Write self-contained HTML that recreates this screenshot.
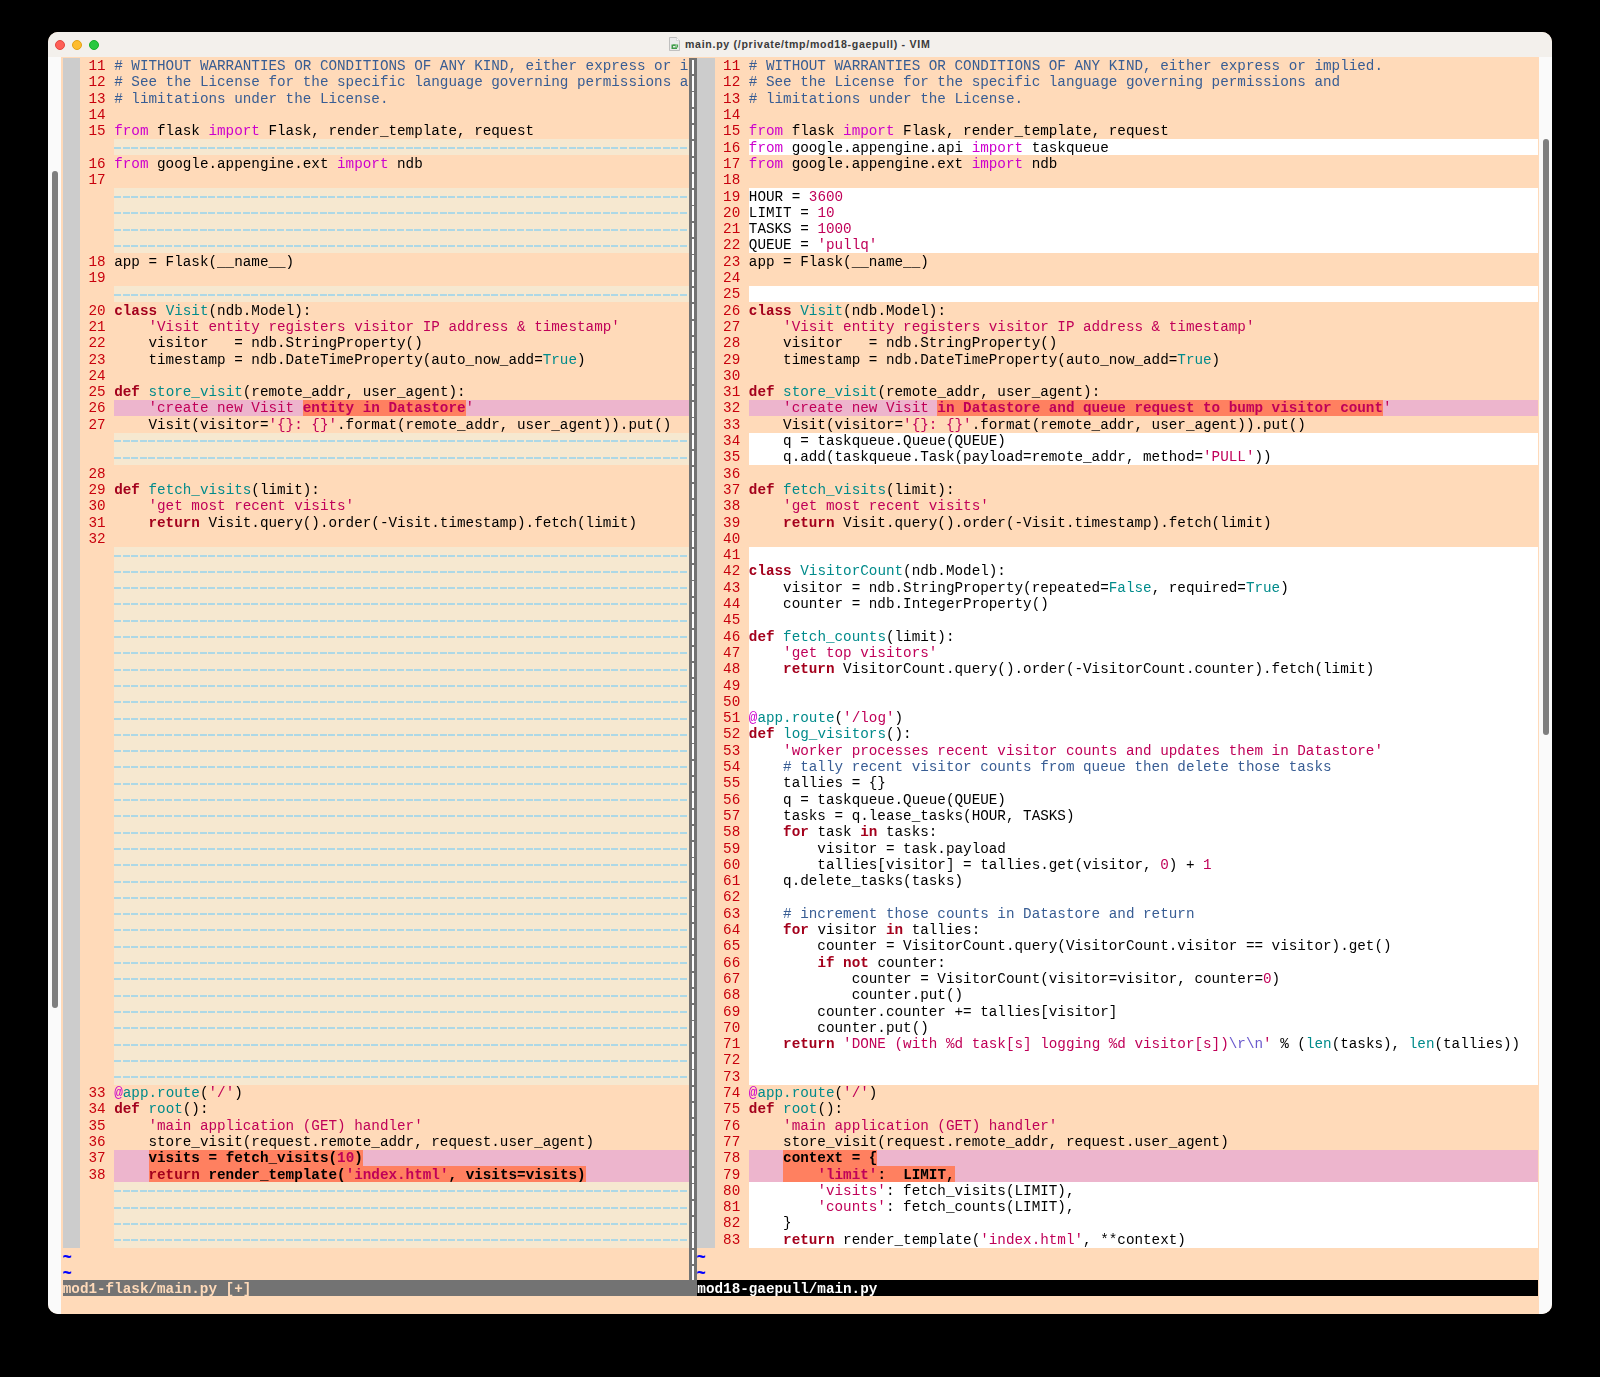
<!DOCTYPE html>
<html><head><meta charset="utf-8"><style>
html,body{margin:0;padding:0;background:#000;}
body{width:1600px;height:1377px;position:relative;overflow:hidden;}
#win{position:absolute;left:48px;top:32px;width:1504px;height:1282px;border-radius:10px;overflow:hidden;background:#ffdab9;}
#title{position:absolute;left:0;top:0;width:1504px;height:24.5px;background:#f3f0ec;}
.abs div{position:absolute;}
#text{position:absolute;left:0;top:0;width:1600px;height:1377px;will-change:transform;}
.t{position:absolute;margin-top:0.5px;white-space:pre;font-family:"Liberation Mono",monospace;font-size:14.296px;line-height:16.3px;height:16.3px;color:#000;}
.ln{color:#c8000c;}
.nt{color:#0000ff;font-weight:bold;}
.cm{color:#385d94;}
.st{color:#c00058;}
.sp{color:#6a5acd;}
.id{color:#008b8b;}
.kw{color:#a3001c;font-weight:bold;}
.pp{color:#cd00cd;}
.b{font-weight:bold;}
.dash{position:absolute;height:2px;background:repeating-linear-gradient(90deg,#add8e6 0,#add8e6 7px,transparent 7px,transparent 8.5757px);}
.vs{position:absolute;width:2.4px;background:repeating-linear-gradient(180deg,transparent 0,transparent 1.8px,#fff 1.8px,#fff 16.3px);}
.sbtrack{position:absolute;bottom:0;background:#fafafa;}
.sbthumb{position:absolute;width:6.4px;border-radius:3.2px;background:#7f7f7f;}
#ttext{position:absolute;left:637px;top:6px;font-family:"Liberation Sans",sans-serif;font-weight:bold;font-size:10.6px;letter-spacing:0.7px;color:#3a3a3a;white-space:pre;}
.ficon{display:inline-block;width:10px;height:13px;background:#eee;border:1px solid #bbb;box-sizing:border-box;vertical-align:-2px;margin-right:6px;}
.tl{position:absolute;top:7.5px;width:10px;height:10px;border-radius:50%;box-sizing:border-box;border:0.6px solid;}
</style></head>
<body>
<div id="win">
 <div id="title">
  <div class="tl" style="left:7px;background:#fe5f57;border-color:#e2463f;"></div>
  <div class="tl" style="left:24.1px;background:#febc2e;border-color:#e1a116;"></div>
  <div class="tl" style="left:41.2px;background:#28c840;border-color:#14ae28;"></div>
  <svg style="position:absolute;left:621px;top:5px" width="11" height="14" viewBox="0 0 11 14"><path d="M0.5 0.5 H7.5 L10.5 3.5 V13.5 H0.5 Z" fill="#ececec" stroke="#b4b4b4" stroke-width="0.8"/><path d="M7.5 0.5 V3.5 H10.5" fill="#fff" stroke="#c8c8c8" stroke-width="0.6"/><path d="M2.5 7.5 H6.5 V9 H4 V10.5 H8 V12 H2.5 Z" fill="#3f9a4a"/><path d="M4 8 H8.5 V10 H6" fill="none" stroke="#4aa553" stroke-width="1.2"/></svg>
  <div id="ttext">main.py (/private/tmp/mod18-gaepull) - VIM</div>
 </div>
 <div class="sbtrack" style="left:0;top:24.5px;width:12.7px;"></div>
 <div class="sbthumb" style="left:3.6px;top:138.9px;height:836.9px;"></div>
 <div class="sbtrack" style="left:1491.2px;top:24.5px;width:12.8px;"></div>
 <div class="sbthumb" style="left:1494.8px;top:107.2px;height:595.5px;"></div>
</div>
<div id="content" class="abs">
<div style="left:62.76px;top:57.65px;width:17.15px;height:1189.90px;background:#cccccc;"></div>
<div style="left:114.21px;top:139.15px;width:574.57px;height:16.30px;background:#f6e8d0;"></div>
<div class="dash" style="left:114.21px;top:147.05px;width:574.57px"></div>
<div style="left:114.21px;top:188.05px;width:574.57px;height:16.30px;background:#f6e8d0;"></div>
<div class="dash" style="left:114.21px;top:195.95px;width:574.57px"></div>
<div style="left:114.21px;top:204.35px;width:574.57px;height:16.30px;background:#f6e8d0;"></div>
<div class="dash" style="left:114.21px;top:212.25px;width:574.57px"></div>
<div style="left:114.21px;top:220.65px;width:574.57px;height:16.30px;background:#f6e8d0;"></div>
<div class="dash" style="left:114.21px;top:228.55px;width:574.57px"></div>
<div style="left:114.21px;top:236.95px;width:574.57px;height:16.30px;background:#f6e8d0;"></div>
<div class="dash" style="left:114.21px;top:244.85px;width:574.57px"></div>
<div style="left:114.21px;top:285.85px;width:574.57px;height:16.30px;background:#f6e8d0;"></div>
<div class="dash" style="left:114.21px;top:293.75px;width:574.57px"></div>
<div style="left:114.21px;top:399.95px;width:574.57px;height:16.30px;background:#edb5cd;"></div>
<div style="left:302.88px;top:399.95px;width:162.94px;height:16.30px;background:#ff8060;"></div>
<div style="left:114.21px;top:432.55px;width:574.57px;height:16.30px;background:#f6e8d0;"></div>
<div class="dash" style="left:114.21px;top:440.45px;width:574.57px"></div>
<div style="left:114.21px;top:448.85px;width:574.57px;height:16.30px;background:#f6e8d0;"></div>
<div class="dash" style="left:114.21px;top:456.75px;width:574.57px"></div>
<div style="left:114.21px;top:546.65px;width:574.57px;height:16.30px;background:#f6e8d0;"></div>
<div class="dash" style="left:114.21px;top:554.55px;width:574.57px"></div>
<div style="left:114.21px;top:562.95px;width:574.57px;height:16.30px;background:#f6e8d0;"></div>
<div class="dash" style="left:114.21px;top:570.85px;width:574.57px"></div>
<div style="left:114.21px;top:579.25px;width:574.57px;height:16.30px;background:#f6e8d0;"></div>
<div class="dash" style="left:114.21px;top:587.15px;width:574.57px"></div>
<div style="left:114.21px;top:595.55px;width:574.57px;height:16.30px;background:#f6e8d0;"></div>
<div class="dash" style="left:114.21px;top:603.45px;width:574.57px"></div>
<div style="left:114.21px;top:611.85px;width:574.57px;height:16.30px;background:#f6e8d0;"></div>
<div class="dash" style="left:114.21px;top:619.75px;width:574.57px"></div>
<div style="left:114.21px;top:628.15px;width:574.57px;height:16.30px;background:#f6e8d0;"></div>
<div class="dash" style="left:114.21px;top:636.05px;width:574.57px"></div>
<div style="left:114.21px;top:644.45px;width:574.57px;height:16.30px;background:#f6e8d0;"></div>
<div class="dash" style="left:114.21px;top:652.35px;width:574.57px"></div>
<div style="left:114.21px;top:660.75px;width:574.57px;height:16.30px;background:#f6e8d0;"></div>
<div class="dash" style="left:114.21px;top:668.65px;width:574.57px"></div>
<div style="left:114.21px;top:677.05px;width:574.57px;height:16.30px;background:#f6e8d0;"></div>
<div class="dash" style="left:114.21px;top:684.95px;width:574.57px"></div>
<div style="left:114.21px;top:693.35px;width:574.57px;height:16.30px;background:#f6e8d0;"></div>
<div class="dash" style="left:114.21px;top:701.25px;width:574.57px"></div>
<div style="left:114.21px;top:709.65px;width:574.57px;height:16.30px;background:#f6e8d0;"></div>
<div class="dash" style="left:114.21px;top:717.55px;width:574.57px"></div>
<div style="left:114.21px;top:725.95px;width:574.57px;height:16.30px;background:#f6e8d0;"></div>
<div class="dash" style="left:114.21px;top:733.85px;width:574.57px"></div>
<div style="left:114.21px;top:742.25px;width:574.57px;height:16.30px;background:#f6e8d0;"></div>
<div class="dash" style="left:114.21px;top:750.15px;width:574.57px"></div>
<div style="left:114.21px;top:758.55px;width:574.57px;height:16.30px;background:#f6e8d0;"></div>
<div class="dash" style="left:114.21px;top:766.45px;width:574.57px"></div>
<div style="left:114.21px;top:774.85px;width:574.57px;height:16.30px;background:#f6e8d0;"></div>
<div class="dash" style="left:114.21px;top:782.75px;width:574.57px"></div>
<div style="left:114.21px;top:791.15px;width:574.57px;height:16.30px;background:#f6e8d0;"></div>
<div class="dash" style="left:114.21px;top:799.05px;width:574.57px"></div>
<div style="left:114.21px;top:807.45px;width:574.57px;height:16.30px;background:#f6e8d0;"></div>
<div class="dash" style="left:114.21px;top:815.35px;width:574.57px"></div>
<div style="left:114.21px;top:823.75px;width:574.57px;height:16.30px;background:#f6e8d0;"></div>
<div class="dash" style="left:114.21px;top:831.65px;width:574.57px"></div>
<div style="left:114.21px;top:840.05px;width:574.57px;height:16.30px;background:#f6e8d0;"></div>
<div class="dash" style="left:114.21px;top:847.95px;width:574.57px"></div>
<div style="left:114.21px;top:856.35px;width:574.57px;height:16.30px;background:#f6e8d0;"></div>
<div class="dash" style="left:114.21px;top:864.25px;width:574.57px"></div>
<div style="left:114.21px;top:872.65px;width:574.57px;height:16.30px;background:#f6e8d0;"></div>
<div class="dash" style="left:114.21px;top:880.55px;width:574.57px"></div>
<div style="left:114.21px;top:888.95px;width:574.57px;height:16.30px;background:#f6e8d0;"></div>
<div class="dash" style="left:114.21px;top:896.85px;width:574.57px"></div>
<div style="left:114.21px;top:905.25px;width:574.57px;height:16.30px;background:#f6e8d0;"></div>
<div class="dash" style="left:114.21px;top:913.15px;width:574.57px"></div>
<div style="left:114.21px;top:921.55px;width:574.57px;height:16.30px;background:#f6e8d0;"></div>
<div class="dash" style="left:114.21px;top:929.45px;width:574.57px"></div>
<div style="left:114.21px;top:937.85px;width:574.57px;height:16.30px;background:#f6e8d0;"></div>
<div class="dash" style="left:114.21px;top:945.75px;width:574.57px"></div>
<div style="left:114.21px;top:954.15px;width:574.57px;height:16.30px;background:#f6e8d0;"></div>
<div class="dash" style="left:114.21px;top:962.05px;width:574.57px"></div>
<div style="left:114.21px;top:970.45px;width:574.57px;height:16.30px;background:#f6e8d0;"></div>
<div class="dash" style="left:114.21px;top:978.35px;width:574.57px"></div>
<div style="left:114.21px;top:986.75px;width:574.57px;height:16.30px;background:#f6e8d0;"></div>
<div class="dash" style="left:114.21px;top:994.65px;width:574.57px"></div>
<div style="left:114.21px;top:1003.05px;width:574.57px;height:16.30px;background:#f6e8d0;"></div>
<div class="dash" style="left:114.21px;top:1010.95px;width:574.57px"></div>
<div style="left:114.21px;top:1019.35px;width:574.57px;height:16.30px;background:#f6e8d0;"></div>
<div class="dash" style="left:114.21px;top:1027.25px;width:574.57px"></div>
<div style="left:114.21px;top:1035.65px;width:574.57px;height:16.30px;background:#f6e8d0;"></div>
<div class="dash" style="left:114.21px;top:1043.55px;width:574.57px"></div>
<div style="left:114.21px;top:1051.95px;width:574.57px;height:16.30px;background:#f6e8d0;"></div>
<div class="dash" style="left:114.21px;top:1059.85px;width:574.57px"></div>
<div style="left:114.21px;top:1068.25px;width:574.57px;height:16.30px;background:#f6e8d0;"></div>
<div class="dash" style="left:114.21px;top:1076.15px;width:574.57px"></div>
<div style="left:114.21px;top:1149.75px;width:574.57px;height:16.30px;background:#edb5cd;"></div>
<div style="left:148.52px;top:1149.75px;width:214.39px;height:16.30px;background:#ff8060;"></div>
<div style="left:114.21px;top:1166.05px;width:574.57px;height:16.30px;background:#edb5cd;"></div>
<div style="left:148.52px;top:1166.05px;width:437.36px;height:16.30px;background:#ff8060;"></div>
<div style="left:114.21px;top:1182.35px;width:574.57px;height:16.30px;background:#f6e8d0;"></div>
<div class="dash" style="left:114.21px;top:1190.25px;width:574.57px"></div>
<div style="left:114.21px;top:1198.65px;width:574.57px;height:16.30px;background:#f6e8d0;"></div>
<div class="dash" style="left:114.21px;top:1206.55px;width:574.57px"></div>
<div style="left:114.21px;top:1214.95px;width:574.57px;height:16.30px;background:#f6e8d0;"></div>
<div class="dash" style="left:114.21px;top:1222.85px;width:574.57px"></div>
<div style="left:114.21px;top:1231.25px;width:574.57px;height:16.30px;background:#f6e8d0;"></div>
<div class="dash" style="left:114.21px;top:1239.15px;width:574.57px"></div>
<div style="left:697.36px;top:57.65px;width:17.15px;height:1189.90px;background:#cccccc;"></div>
<div style="left:748.82px;top:139.15px;width:788.96px;height:16.30px;background:#ffffff;"></div>
<div style="left:748.82px;top:188.05px;width:788.96px;height:16.30px;background:#ffffff;"></div>
<div style="left:748.82px;top:204.35px;width:788.96px;height:16.30px;background:#ffffff;"></div>
<div style="left:748.82px;top:220.65px;width:788.96px;height:16.30px;background:#ffffff;"></div>
<div style="left:748.82px;top:236.95px;width:788.96px;height:16.30px;background:#ffffff;"></div>
<div style="left:748.82px;top:285.85px;width:788.96px;height:16.30px;background:#ffffff;"></div>
<div style="left:748.82px;top:399.95px;width:788.96px;height:16.30px;background:#edb5cd;"></div>
<div style="left:937.48px;top:399.95px;width:445.94px;height:16.30px;background:#ff8060;"></div>
<div style="left:748.82px;top:432.55px;width:788.96px;height:16.30px;background:#ffffff;"></div>
<div style="left:748.82px;top:448.85px;width:788.96px;height:16.30px;background:#ffffff;"></div>
<div style="left:748.82px;top:546.65px;width:788.96px;height:16.30px;background:#ffffff;"></div>
<div style="left:748.82px;top:562.95px;width:788.96px;height:16.30px;background:#ffffff;"></div>
<div style="left:748.82px;top:579.25px;width:788.96px;height:16.30px;background:#ffffff;"></div>
<div style="left:748.82px;top:595.55px;width:788.96px;height:16.30px;background:#ffffff;"></div>
<div style="left:748.82px;top:611.85px;width:788.96px;height:16.30px;background:#ffffff;"></div>
<div style="left:748.82px;top:628.15px;width:788.96px;height:16.30px;background:#ffffff;"></div>
<div style="left:748.82px;top:644.45px;width:788.96px;height:16.30px;background:#ffffff;"></div>
<div style="left:748.82px;top:660.75px;width:788.96px;height:16.30px;background:#ffffff;"></div>
<div style="left:748.82px;top:677.05px;width:788.96px;height:16.30px;background:#ffffff;"></div>
<div style="left:748.82px;top:693.35px;width:788.96px;height:16.30px;background:#ffffff;"></div>
<div style="left:748.82px;top:709.65px;width:788.96px;height:16.30px;background:#ffffff;"></div>
<div style="left:748.82px;top:725.95px;width:788.96px;height:16.30px;background:#ffffff;"></div>
<div style="left:748.82px;top:742.25px;width:788.96px;height:16.30px;background:#ffffff;"></div>
<div style="left:748.82px;top:758.55px;width:788.96px;height:16.30px;background:#ffffff;"></div>
<div style="left:748.82px;top:774.85px;width:788.96px;height:16.30px;background:#ffffff;"></div>
<div style="left:748.82px;top:791.15px;width:788.96px;height:16.30px;background:#ffffff;"></div>
<div style="left:748.82px;top:807.45px;width:788.96px;height:16.30px;background:#ffffff;"></div>
<div style="left:748.82px;top:823.75px;width:788.96px;height:16.30px;background:#ffffff;"></div>
<div style="left:748.82px;top:840.05px;width:788.96px;height:16.30px;background:#ffffff;"></div>
<div style="left:748.82px;top:856.35px;width:788.96px;height:16.30px;background:#ffffff;"></div>
<div style="left:748.82px;top:872.65px;width:788.96px;height:16.30px;background:#ffffff;"></div>
<div style="left:748.82px;top:888.95px;width:788.96px;height:16.30px;background:#ffffff;"></div>
<div style="left:748.82px;top:905.25px;width:788.96px;height:16.30px;background:#ffffff;"></div>
<div style="left:748.82px;top:921.55px;width:788.96px;height:16.30px;background:#ffffff;"></div>
<div style="left:748.82px;top:937.85px;width:788.96px;height:16.30px;background:#ffffff;"></div>
<div style="left:748.82px;top:954.15px;width:788.96px;height:16.30px;background:#ffffff;"></div>
<div style="left:748.82px;top:970.45px;width:788.96px;height:16.30px;background:#ffffff;"></div>
<div style="left:748.82px;top:986.75px;width:788.96px;height:16.30px;background:#ffffff;"></div>
<div style="left:748.82px;top:1003.05px;width:788.96px;height:16.30px;background:#ffffff;"></div>
<div style="left:748.82px;top:1019.35px;width:788.96px;height:16.30px;background:#ffffff;"></div>
<div style="left:748.82px;top:1035.65px;width:788.96px;height:16.30px;background:#ffffff;"></div>
<div style="left:748.82px;top:1051.95px;width:788.96px;height:16.30px;background:#ffffff;"></div>
<div style="left:748.82px;top:1068.25px;width:788.96px;height:16.30px;background:#ffffff;"></div>
<div style="left:748.82px;top:1149.75px;width:788.96px;height:16.30px;background:#edb5cd;"></div>
<div style="left:783.12px;top:1149.75px;width:94.33px;height:16.30px;background:#ff8060;"></div>
<div style="left:748.82px;top:1166.05px;width:788.96px;height:16.30px;background:#edb5cd;"></div>
<div style="left:783.12px;top:1166.05px;width:171.51px;height:16.30px;background:#ff8060;"></div>
<div style="left:748.82px;top:1182.35px;width:788.96px;height:16.30px;background:#ffffff;"></div>
<div style="left:748.82px;top:1198.65px;width:788.96px;height:16.30px;background:#ffffff;"></div>
<div style="left:748.82px;top:1214.95px;width:788.96px;height:16.30px;background:#ffffff;"></div>
<div style="left:748.82px;top:1231.25px;width:788.96px;height:16.30px;background:#ffffff;"></div>
<div style="left:688.79px;top:57.65px;width:8.58px;height:1222.50px;background:#737373;"></div>
<div class="vs" style="left:691.87px;top:57.65px;height:1222.50px"></div>
<div style="left:62.76px;top:1280.15px;width:634.60px;height:16.30px;background:#737373;"></div>
<div style="left:697.36px;top:1280.15px;width:840.42px;height:16.30px;background:#000000;"></div>
</div>
<div id="text">
<div class="t ln" style="left:79.91px;top:57.65px"> 11 </div>
<div class="t" style="left:114.21px;top:57.65px"><span class="cm"># WITHOUT WARRANTIES OR CONDITIONS OF ANY KIND, either express or i</span></div>
<div class="t ln" style="left:79.91px;top:73.95px"> 12 </div>
<div class="t" style="left:114.21px;top:73.95px"><span class="cm"># See the License for the specific language governing permissions a</span></div>
<div class="t ln" style="left:79.91px;top:90.25px"> 13 </div>
<div class="t" style="left:114.21px;top:90.25px"><span class="cm"># limitations under the License.</span></div>
<div class="t ln" style="left:79.91px;top:106.55px"> 14 </div>
<div class="t ln" style="left:79.91px;top:122.85px"> 15 </div>
<div class="t" style="left:114.21px;top:122.85px"><span class="pp">from</span> flask <span class="pp">import</span> Flask, render_template, request</div>
<div class="t ln" style="left:79.91px;top:155.45px"> 16 </div>
<div class="t" style="left:114.21px;top:155.45px"><span class="pp">from</span> google.appengine.ext <span class="pp">import</span> ndb</div>
<div class="t ln" style="left:79.91px;top:171.75px"> 17 </div>
<div class="t ln" style="left:79.91px;top:253.25px"> 18 </div>
<div class="t" style="left:114.21px;top:253.25px">app = Flask(__name__)</div>
<div class="t ln" style="left:79.91px;top:269.55px"> 19 </div>
<div class="t ln" style="left:79.91px;top:302.15px"> 20 </div>
<div class="t" style="left:114.21px;top:302.15px"><span class="kw">class</span> <span class="id">Visit</span>(ndb.Model):</div>
<div class="t ln" style="left:79.91px;top:318.45px"> 21 </div>
<div class="t" style="left:114.21px;top:318.45px">    <span class="st">&#x27;Visit entity registers visitor IP address &amp; timestamp&#x27;</span></div>
<div class="t ln" style="left:79.91px;top:334.75px"> 22 </div>
<div class="t" style="left:114.21px;top:334.75px">    visitor   = ndb.StringProperty()</div>
<div class="t ln" style="left:79.91px;top:351.05px"> 23 </div>
<div class="t" style="left:114.21px;top:351.05px">    timestamp = ndb.DateTimeProperty(auto_now_add=<span class="id">True</span>)</div>
<div class="t ln" style="left:79.91px;top:367.35px"> 24 </div>
<div class="t ln" style="left:79.91px;top:383.65px"> 25 </div>
<div class="t" style="left:114.21px;top:383.65px"><span class="kw">def</span> <span class="id">store_visit</span>(remote_addr, user_agent):</div>
<div class="t ln" style="left:79.91px;top:399.95px"> 26 </div>
<div class="t" style="left:114.21px;top:399.95px">    <span class="st">&#x27;create new Visit </span><span class="st b">entity in Datastore</span><span class="st">&#x27;</span></div>
<div class="t ln" style="left:79.91px;top:416.25px"> 27 </div>
<div class="t" style="left:114.21px;top:416.25px">    Visit(visitor=<span class="st">&#x27;{}: {}&#x27;</span>.format(remote_addr, user_agent)).put()</div>
<div class="t ln" style="left:79.91px;top:465.15px"> 28 </div>
<div class="t ln" style="left:79.91px;top:481.45px"> 29 </div>
<div class="t" style="left:114.21px;top:481.45px"><span class="kw">def</span> <span class="id">fetch_visits</span>(limit):</div>
<div class="t ln" style="left:79.91px;top:497.75px"> 30 </div>
<div class="t" style="left:114.21px;top:497.75px">    <span class="st">&#x27;get most recent visits&#x27;</span></div>
<div class="t ln" style="left:79.91px;top:514.05px"> 31 </div>
<div class="t" style="left:114.21px;top:514.05px">    <span class="kw">return</span> Visit.query().order(-Visit.timestamp).fetch(limit)</div>
<div class="t ln" style="left:79.91px;top:530.35px"> 32 </div>
<div class="t ln" style="left:79.91px;top:1084.55px"> 33 </div>
<div class="t" style="left:114.21px;top:1084.55px"><span class="pp">@</span><span class="id">app.route</span>(<span class="st">&#x27;/&#x27;</span>)</div>
<div class="t ln" style="left:79.91px;top:1100.85px"> 34 </div>
<div class="t" style="left:114.21px;top:1100.85px"><span class="kw">def</span> <span class="id">root</span>():</div>
<div class="t ln" style="left:79.91px;top:1117.15px"> 35 </div>
<div class="t" style="left:114.21px;top:1117.15px">    <span class="st">&#x27;main application (GET) handler&#x27;</span></div>
<div class="t ln" style="left:79.91px;top:1133.45px"> 36 </div>
<div class="t" style="left:114.21px;top:1133.45px">    store_visit(request.remote_addr, request.user_agent)</div>
<div class="t ln" style="left:79.91px;top:1149.75px"> 37 </div>
<div class="t" style="left:114.21px;top:1149.75px">    <span class="b">visits</span><span class="b"> </span><span class="b">=</span><span class="b"> </span><span class="b">fetch_visits</span><span class="b">(</span><span class="st b">10</span><span class="b">)</span></div>
<div class="t ln" style="left:79.91px;top:1166.05px"> 38 </div>
<div class="t" style="left:114.21px;top:1166.05px">    <span class="kw b">return</span><span class="b"> </span><span class="b">render_template</span><span class="b">(</span><span class="st b">&#x27;index.html&#x27;</span><span class="b">,</span><span class="b"> </span><span class="b">visits</span><span class="b">=</span><span class="b">visits</span><span class="b">)</span></div>
<div class="t nt" style="left:62.76px;top:1247.55px"><span style="display:inline-block;transform:translateY(1.6px) scale(1.1,1.35)">~</span></div>
<div class="t nt" style="left:62.76px;top:1263.85px"><span style="display:inline-block;transform:translateY(1.6px) scale(1.1,1.35)">~</span></div>
<div class="t ln" style="left:714.51px;top:57.65px"> 11 </div>
<div class="t" style="left:748.82px;top:57.65px"><span class="cm"># WITHOUT WARRANTIES OR CONDITIONS OF ANY KIND, either express or implied.</span></div>
<div class="t ln" style="left:714.51px;top:73.95px"> 12 </div>
<div class="t" style="left:748.82px;top:73.95px"><span class="cm"># See the License for the specific language governing permissions and</span></div>
<div class="t ln" style="left:714.51px;top:90.25px"> 13 </div>
<div class="t" style="left:748.82px;top:90.25px"><span class="cm"># limitations under the License.</span></div>
<div class="t ln" style="left:714.51px;top:106.55px"> 14 </div>
<div class="t ln" style="left:714.51px;top:122.85px"> 15 </div>
<div class="t" style="left:748.82px;top:122.85px"><span class="pp">from</span> flask <span class="pp">import</span> Flask, render_template, request</div>
<div class="t ln" style="left:714.51px;top:139.15px"> 16 </div>
<div class="t" style="left:748.82px;top:139.15px"><span class="pp">from</span> google.appengine.api <span class="pp">import</span> taskqueue</div>
<div class="t ln" style="left:714.51px;top:155.45px"> 17 </div>
<div class="t" style="left:748.82px;top:155.45px"><span class="pp">from</span> google.appengine.ext <span class="pp">import</span> ndb</div>
<div class="t ln" style="left:714.51px;top:171.75px"> 18 </div>
<div class="t ln" style="left:714.51px;top:188.05px"> 19 </div>
<div class="t" style="left:748.82px;top:188.05px">HOUR = <span class="st">3600</span></div>
<div class="t ln" style="left:714.51px;top:204.35px"> 20 </div>
<div class="t" style="left:748.82px;top:204.35px">LIMIT = <span class="st">10</span></div>
<div class="t ln" style="left:714.51px;top:220.65px"> 21 </div>
<div class="t" style="left:748.82px;top:220.65px">TASKS = <span class="st">1000</span></div>
<div class="t ln" style="left:714.51px;top:236.95px"> 22 </div>
<div class="t" style="left:748.82px;top:236.95px">QUEUE = <span class="st">&#x27;pullq&#x27;</span></div>
<div class="t ln" style="left:714.51px;top:253.25px"> 23 </div>
<div class="t" style="left:748.82px;top:253.25px">app = Flask(__name__)</div>
<div class="t ln" style="left:714.51px;top:269.55px"> 24 </div>
<div class="t ln" style="left:714.51px;top:285.85px"> 25 </div>
<div class="t ln" style="left:714.51px;top:302.15px"> 26 </div>
<div class="t" style="left:748.82px;top:302.15px"><span class="kw">class</span> <span class="id">Visit</span>(ndb.Model):</div>
<div class="t ln" style="left:714.51px;top:318.45px"> 27 </div>
<div class="t" style="left:748.82px;top:318.45px">    <span class="st">&#x27;Visit entity registers visitor IP address &amp; timestamp&#x27;</span></div>
<div class="t ln" style="left:714.51px;top:334.75px"> 28 </div>
<div class="t" style="left:748.82px;top:334.75px">    visitor   = ndb.StringProperty()</div>
<div class="t ln" style="left:714.51px;top:351.05px"> 29 </div>
<div class="t" style="left:748.82px;top:351.05px">    timestamp = ndb.DateTimeProperty(auto_now_add=<span class="id">True</span>)</div>
<div class="t ln" style="left:714.51px;top:367.35px"> 30 </div>
<div class="t ln" style="left:714.51px;top:383.65px"> 31 </div>
<div class="t" style="left:748.82px;top:383.65px"><span class="kw">def</span> <span class="id">store_visit</span>(remote_addr, user_agent):</div>
<div class="t ln" style="left:714.51px;top:399.95px"> 32 </div>
<div class="t" style="left:748.82px;top:399.95px">    <span class="st">&#x27;create new Visit </span><span class="st b">in Datastore and queue request to bump visitor count</span><span class="st">&#x27;</span></div>
<div class="t ln" style="left:714.51px;top:416.25px"> 33 </div>
<div class="t" style="left:748.82px;top:416.25px">    Visit(visitor=<span class="st">&#x27;{}: {}&#x27;</span>.format(remote_addr, user_agent)).put()</div>
<div class="t ln" style="left:714.51px;top:432.55px"> 34 </div>
<div class="t" style="left:748.82px;top:432.55px">    q = taskqueue.Queue(QUEUE)</div>
<div class="t ln" style="left:714.51px;top:448.85px"> 35 </div>
<div class="t" style="left:748.82px;top:448.85px">    q.add(taskqueue.Task(payload=remote_addr, method=<span class="st">&#x27;PULL&#x27;</span>))</div>
<div class="t ln" style="left:714.51px;top:465.15px"> 36 </div>
<div class="t ln" style="left:714.51px;top:481.45px"> 37 </div>
<div class="t" style="left:748.82px;top:481.45px"><span class="kw">def</span> <span class="id">fetch_visits</span>(limit):</div>
<div class="t ln" style="left:714.51px;top:497.75px"> 38 </div>
<div class="t" style="left:748.82px;top:497.75px">    <span class="st">&#x27;get most recent visits&#x27;</span></div>
<div class="t ln" style="left:714.51px;top:514.05px"> 39 </div>
<div class="t" style="left:748.82px;top:514.05px">    <span class="kw">return</span> Visit.query().order(-Visit.timestamp).fetch(limit)</div>
<div class="t ln" style="left:714.51px;top:530.35px"> 40 </div>
<div class="t ln" style="left:714.51px;top:546.65px"> 41 </div>
<div class="t ln" style="left:714.51px;top:562.95px"> 42 </div>
<div class="t" style="left:748.82px;top:562.95px"><span class="kw">class</span> <span class="id">VisitorCount</span>(ndb.Model):</div>
<div class="t ln" style="left:714.51px;top:579.25px"> 43 </div>
<div class="t" style="left:748.82px;top:579.25px">    visitor = ndb.StringProperty(repeated=<span class="id">False</span>, required=<span class="id">True</span>)</div>
<div class="t ln" style="left:714.51px;top:595.55px"> 44 </div>
<div class="t" style="left:748.82px;top:595.55px">    counter = ndb.IntegerProperty()</div>
<div class="t ln" style="left:714.51px;top:611.85px"> 45 </div>
<div class="t ln" style="left:714.51px;top:628.15px"> 46 </div>
<div class="t" style="left:748.82px;top:628.15px"><span class="kw">def</span> <span class="id">fetch_counts</span>(limit):</div>
<div class="t ln" style="left:714.51px;top:644.45px"> 47 </div>
<div class="t" style="left:748.82px;top:644.45px">    <span class="st">&#x27;get top visitors&#x27;</span></div>
<div class="t ln" style="left:714.51px;top:660.75px"> 48 </div>
<div class="t" style="left:748.82px;top:660.75px">    <span class="kw">return</span> VisitorCount.query().order(-VisitorCount.counter).fetch(limit)</div>
<div class="t ln" style="left:714.51px;top:677.05px"> 49 </div>
<div class="t ln" style="left:714.51px;top:693.35px"> 50 </div>
<div class="t ln" style="left:714.51px;top:709.65px"> 51 </div>
<div class="t" style="left:748.82px;top:709.65px"><span class="pp">@</span><span class="id">app.route</span>(<span class="st">&#x27;/log&#x27;</span>)</div>
<div class="t ln" style="left:714.51px;top:725.95px"> 52 </div>
<div class="t" style="left:748.82px;top:725.95px"><span class="kw">def</span> <span class="id">log_visitors</span>():</div>
<div class="t ln" style="left:714.51px;top:742.25px"> 53 </div>
<div class="t" style="left:748.82px;top:742.25px">    <span class="st">&#x27;worker processes recent visitor counts and updates them in Datastore&#x27;</span></div>
<div class="t ln" style="left:714.51px;top:758.55px"> 54 </div>
<div class="t" style="left:748.82px;top:758.55px">    <span class="cm"># tally recent visitor counts from queue then delete those tasks</span></div>
<div class="t ln" style="left:714.51px;top:774.85px"> 55 </div>
<div class="t" style="left:748.82px;top:774.85px">    tallies = {}</div>
<div class="t ln" style="left:714.51px;top:791.15px"> 56 </div>
<div class="t" style="left:748.82px;top:791.15px">    q = taskqueue.Queue(QUEUE)</div>
<div class="t ln" style="left:714.51px;top:807.45px"> 57 </div>
<div class="t" style="left:748.82px;top:807.45px">    tasks = q.lease_tasks(HOUR, TASKS)</div>
<div class="t ln" style="left:714.51px;top:823.75px"> 58 </div>
<div class="t" style="left:748.82px;top:823.75px">    <span class="kw">for</span> task <span class="kw">in</span> tasks:</div>
<div class="t ln" style="left:714.51px;top:840.05px"> 59 </div>
<div class="t" style="left:748.82px;top:840.05px">        visitor = task.payload</div>
<div class="t ln" style="left:714.51px;top:856.35px"> 60 </div>
<div class="t" style="left:748.82px;top:856.35px">        tallies[visitor] = tallies.get(visitor, <span class="st">0</span>) + <span class="st">1</span></div>
<div class="t ln" style="left:714.51px;top:872.65px"> 61 </div>
<div class="t" style="left:748.82px;top:872.65px">    q.delete_tasks(tasks)</div>
<div class="t ln" style="left:714.51px;top:888.95px"> 62 </div>
<div class="t ln" style="left:714.51px;top:905.25px"> 63 </div>
<div class="t" style="left:748.82px;top:905.25px">    <span class="cm"># increment those counts in Datastore and return</span></div>
<div class="t ln" style="left:714.51px;top:921.55px"> 64 </div>
<div class="t" style="left:748.82px;top:921.55px">    <span class="kw">for</span> visitor <span class="kw">in</span> tallies:</div>
<div class="t ln" style="left:714.51px;top:937.85px"> 65 </div>
<div class="t" style="left:748.82px;top:937.85px">        counter = VisitorCount.query(VisitorCount.visitor == visitor).get()</div>
<div class="t ln" style="left:714.51px;top:954.15px"> 66 </div>
<div class="t" style="left:748.82px;top:954.15px">        <span class="kw">if</span> <span class="kw">not</span> counter:</div>
<div class="t ln" style="left:714.51px;top:970.45px"> 67 </div>
<div class="t" style="left:748.82px;top:970.45px">            counter = VisitorCount(visitor=visitor, counter=<span class="st">0</span>)</div>
<div class="t ln" style="left:714.51px;top:986.75px"> 68 </div>
<div class="t" style="left:748.82px;top:986.75px">            counter.put()</div>
<div class="t ln" style="left:714.51px;top:1003.05px"> 69 </div>
<div class="t" style="left:748.82px;top:1003.05px">        counter.counter += tallies[visitor]</div>
<div class="t ln" style="left:714.51px;top:1019.35px"> 70 </div>
<div class="t" style="left:748.82px;top:1019.35px">        counter.put()</div>
<div class="t ln" style="left:714.51px;top:1035.65px"> 71 </div>
<div class="t" style="left:748.82px;top:1035.65px">    <span class="kw">return</span> <span class="st">&#x27;DONE (with %d task[s] logging %d visitor[s])</span><span class="sp">\r</span><span class="sp">\n</span><span class="st">&#x27;</span> % (<span class="id">len</span>(tasks), <span class="id">len</span>(tallies))</div>
<div class="t ln" style="left:714.51px;top:1051.95px"> 72 </div>
<div class="t ln" style="left:714.51px;top:1068.25px"> 73 </div>
<div class="t ln" style="left:714.51px;top:1084.55px"> 74 </div>
<div class="t" style="left:748.82px;top:1084.55px"><span class="pp">@</span><span class="id">app.route</span>(<span class="st">&#x27;/&#x27;</span>)</div>
<div class="t ln" style="left:714.51px;top:1100.85px"> 75 </div>
<div class="t" style="left:748.82px;top:1100.85px"><span class="kw">def</span> <span class="id">root</span>():</div>
<div class="t ln" style="left:714.51px;top:1117.15px"> 76 </div>
<div class="t" style="left:748.82px;top:1117.15px">    <span class="st">&#x27;main application (GET) handler&#x27;</span></div>
<div class="t ln" style="left:714.51px;top:1133.45px"> 77 </div>
<div class="t" style="left:748.82px;top:1133.45px">    store_visit(request.remote_addr, request.user_agent)</div>
<div class="t ln" style="left:714.51px;top:1149.75px"> 78 </div>
<div class="t" style="left:748.82px;top:1149.75px">    <span class="b">context</span><span class="b"> </span><span class="b">=</span><span class="b"> </span><span class="b">{</span></div>
<div class="t ln" style="left:714.51px;top:1166.05px"> 79 </div>
<div class="t" style="left:748.82px;top:1166.05px">    <span class="b"> </span><span class="b"> </span><span class="b"> </span><span class="b"> </span><span class="st b">&#x27;limit&#x27;</span><span class="b">:</span><span class="b"> </span><span class="b"> </span><span class="b">LIMIT</span><span class="b">,</span></div>
<div class="t ln" style="left:714.51px;top:1182.35px"> 80 </div>
<div class="t" style="left:748.82px;top:1182.35px">        <span class="st">&#x27;visits&#x27;</span>: fetch_visits(LIMIT),</div>
<div class="t ln" style="left:714.51px;top:1198.65px"> 81 </div>
<div class="t" style="left:748.82px;top:1198.65px">        <span class="st">&#x27;counts&#x27;</span>: fetch_counts(LIMIT),</div>
<div class="t ln" style="left:714.51px;top:1214.95px"> 82 </div>
<div class="t" style="left:748.82px;top:1214.95px">    }</div>
<div class="t ln" style="left:714.51px;top:1231.25px"> 83 </div>
<div class="t" style="left:748.82px;top:1231.25px">    <span class="kw">return</span> render_template(<span class="st">&#x27;index.html&#x27;</span>, **context)</div>
<div class="t nt" style="left:697.36px;top:1247.55px"><span style="display:inline-block;transform:translateY(1.6px) scale(1.1,1.35)">~</span></div>
<div class="t nt" style="left:697.36px;top:1263.85px"><span style="display:inline-block;transform:translateY(1.6px) scale(1.1,1.35)">~</span></div>
<div class="t b" style="left:62.76px;top:1280.15px;color:#ffdab9">mod1-flask/main.py [+]</div>
<div class="t b" style="left:697.36px;top:1280.15px;color:#ffffff">mod18-gaepull/main.py</div>
</div>
</body></html>
